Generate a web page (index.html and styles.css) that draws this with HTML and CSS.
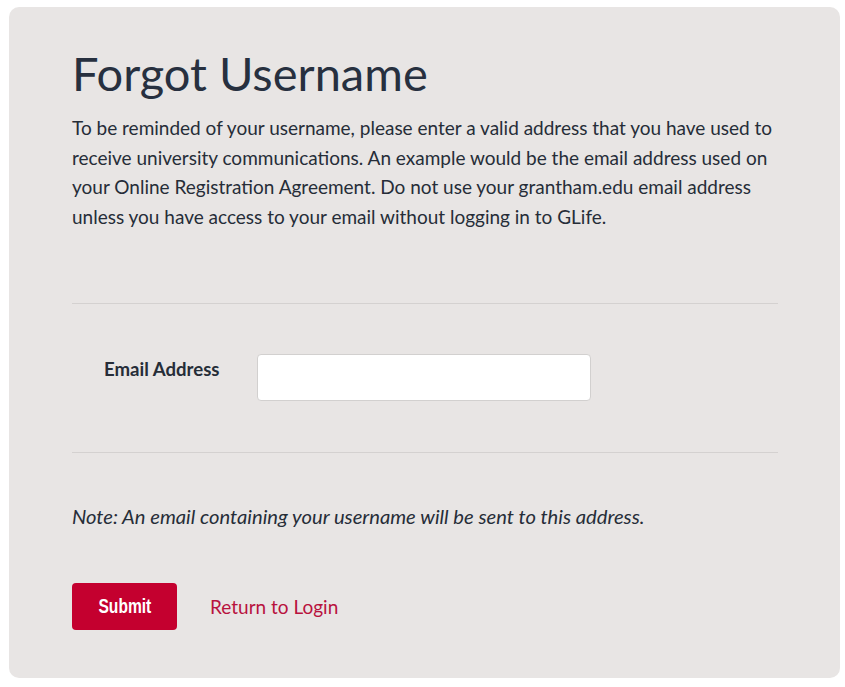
FILE: index.html
```html
<!DOCTYPE html>
<html lang="en">
<head>
<meta charset="utf-8">
<title>Forgot Username</title>
<link rel="stylesheet" href="styles.css">
</head>
<body>
<main class="card">
  <h1 class="title">Forgot Username</h1>
  <p class="intro">To be reminded of your username, please enter a valid address that you have used to receive university communications. An example would be the email address used on your Online Registration Agreement. Do not use your grantham.edu email address unless you have access to your email without logging in to GLife.</p>
  <hr class="divider divider-top">
  <div class="field">
    <label class="label" for="email">Email Address</label>
    <input class="input" id="email" type="text">
  </div>
  <hr class="divider">
  <p class="note">Note: An email containing your username will be sent to this address.</p>
  <div class="actions">
    <button class="submit" type="button"><span class="submit-text">Submit</span></button>
    <a class="link" href="#">Return to Login</a>
  </div>
</main>
</body>
</html>
```
FILE: styles.css
```css
html, body {
  margin: 0;
  padding: 0;
  background: #ffffff;
}
body {
  padding: 7px 5px 9px 9px;
  font-family: Lato, "Noto Sans", sans-serif;
  color: #262d38;
}
.card {
  background: #e8e5e4;
  border-radius: 10px;
  height: 671px;
  box-sizing: border-box;
  padding: 36px 62px 0 63px;
}
.title {
  margin: 0;
  font-weight: 400;
  font-size: 47px;
  line-height: 60px;
  color: #27303f;
}
.intro {
  margin: 10px 0 0;
  font-size: 19px;
  line-height: 29.5px;
  width: 706px;
}
.divider {
  border: 0;
  border-top: 1px solid #d4d1d0;
  margin: 0;
}
.divider-top {
  margin-top: 72px;
}
.field {
  display: flex;
  align-items: flex-start;
  padding: 50px 0 51px 32px;
}
.label {
  width: 153px;
  font-size: 18.6px;
  font-weight: 700;
  line-height: 30px;
  margin-top: 0;
}
.input {
  width: 334px;
  height: 47px;
  box-sizing: border-box;
  border: 1px solid #d2d0cf;
  border-radius: 4px;
  background: #ffffff;
  margin: 0;
}
.note {
  margin: 49px 0 0;
  font-style: italic;
  font-size: 20.2px;
  line-height: 28px;
}
.actions {
  display: flex;
  align-items: center;
  gap: 33px;
  margin-top: 53px;
}
.submit {
  width: 105px;
  height: 47px;
  padding: 0;
  border: 0;
  border-radius: 4px;
  background: #c4002f;
  color: #ffffff;
  cursor: pointer;
}
.submit-text {
  display: inline-block;
  font-family: "Liberation Sans", Arial, sans-serif;
  font-weight: 700;
  font-size: 20px;
  transform: scaleX(0.78);
}
.link {
  color: #b8123e;
  text-decoration: none;
  font-size: 19px;
}
```
